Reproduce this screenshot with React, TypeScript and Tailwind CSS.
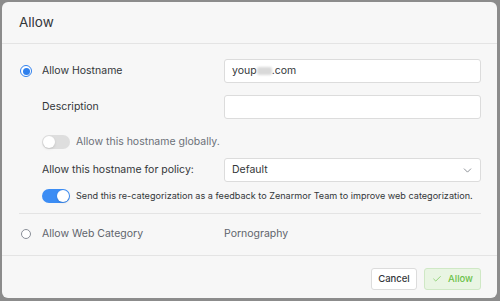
import { ChevronDown, Check } from 'lucide-react';

function Radio({ checked }: { checked?: boolean }) {
  if (checked) {
    return (
      <span className="flex h-[12px] w-[12px] shrink-0 items-center justify-center rounded-full border-[1.5px] border-[#2f80ed] bg-white">
        <span className="h-[7px] w-[7px] rounded-full bg-[#2f80ed]" />
      </span>
    );
  }
  return <span className="block h-[10px] w-[10px] shrink-0 rounded-full border border-[#8a8f98] bg-white" />;
}

function Toggle({ on }: { on?: boolean }) {
  return (
    <span
      className={
        on
          ? 'flex h-[14px] w-[28px] shrink-0 items-center justify-end rounded-full bg-[#3c8df4] px-[1px]'
          : 'flex h-[14px] w-[28px] shrink-0 items-center justify-start rounded-full bg-[#dedede] px-[1px]'
      }
    >
      <span className="h-[12px] w-[12px] rounded-full bg-white shadow-sm" />
    </span>
  );
}

export default function App() {
  return (
    <div
      className="h-[301px] w-[500px] overflow-hidden bg-[#8c8c8c] pl-[2px] pt-[2px] text-[#333639]"
      style={{ fontFamily: 'Inter, "Noto Sans", sans-serif' }}
    >
      <div className="flex h-[296px] w-[495px] flex-col rounded-[6px] bg-[#f7f7f7]">
        <div className="flex h-[42px] items-center border-b border-[#e4e4e4] px-[17px] text-[13.5px]">
          Allow
        </div>

        <div className="flex flex-col pl-[17px] pr-[16px] pt-[15px] text-[10.5px]">
          <div className="flex h-[24px] items-center">
            <div className="flex w-[23px] items-center pl-[1px]">
              <Radio checked />
            </div>
            <div className="w-[182px]">Allow Hostname</div>
            <div className="flex h-[24px] flex-1 items-center rounded-[3px] border border-[#dcdcdc] bg-white px-[7px]">
              youp
              <span className="inline-block h-[8px] w-[15px] rounded-[2px] bg-[#d9d9d9] blur-[1px]" />
              .com
            </div>
          </div>

          <div className="mt-[12px] flex h-[24px] items-center">
            <div className="w-[23px]" />
            <div className="w-[182px]">Description</div>
            <div className="h-[24px] flex-1 rounded-[3px] border border-[#dcdcdc] bg-white" />
          </div>

          <div className="mt-[16px] flex h-[14px] items-center">
            <div className="w-[23px]" />
            <Toggle />
            <span className="ml-[6px] text-[#6b7078]">Allow this hostname globally.</span>
          </div>

          <div className="mt-[9px] flex h-[24px] items-center">
            <div className="w-[23px]" />
            <div className="w-[182px]">Allow this hostname for policy:</div>
            <div className="flex h-[24px] flex-1 items-center justify-between rounded-[3px] border border-[#dcdcdc] bg-white pl-[7px] pr-[6px]">
              Default
              <ChevronDown size={13} strokeWidth={1.4} className="text-[#6b7078]" />
            </div>
          </div>

          <div className="mt-[7px] flex h-[14px] items-center">
            <div className="w-[23px]" />
            <Toggle on />
            <span className="ml-[6px] whitespace-nowrap text-[9.1px]">
              Send this re-categorization as a feedback to Zenarmor Team to improve web categorization.
            </span>
          </div>

          <div className="mt-[10px] border-t border-[#e4e4e4]" />

          <div className="flex h-[40px] items-center text-[#5f646c]">
            <div className="flex w-[23px] items-center pl-[2px]">
              <Radio />
            </div>
            <div className="w-[182px]">Allow Web Category</div>
            <div>Pornography</div>
          </div>
        </div>

        <div className="mt-[1px] flex flex-1 items-start justify-end gap-[7px] border-t border-[#e4e4e4] pr-[16px] pt-[12px]">
          <button className="flex h-[22px] w-[46px] items-center justify-center rounded-[3px] border border-[#dcdcdc] bg-white text-[9.5px] font-medium text-[#333639]">
            Cancel
          </button>
          <button className="flex h-[22px] w-[57px] items-center justify-center gap-[6px] rounded-[3px] border border-[#cfe8c5] bg-[#e9f5e3] text-[9.5px] font-medium text-[#6cc24a]">
            <Check size={10} strokeWidth={1.6} />
            Allow
          </button>
        </div>
      </div>
    </div>
  );
}
